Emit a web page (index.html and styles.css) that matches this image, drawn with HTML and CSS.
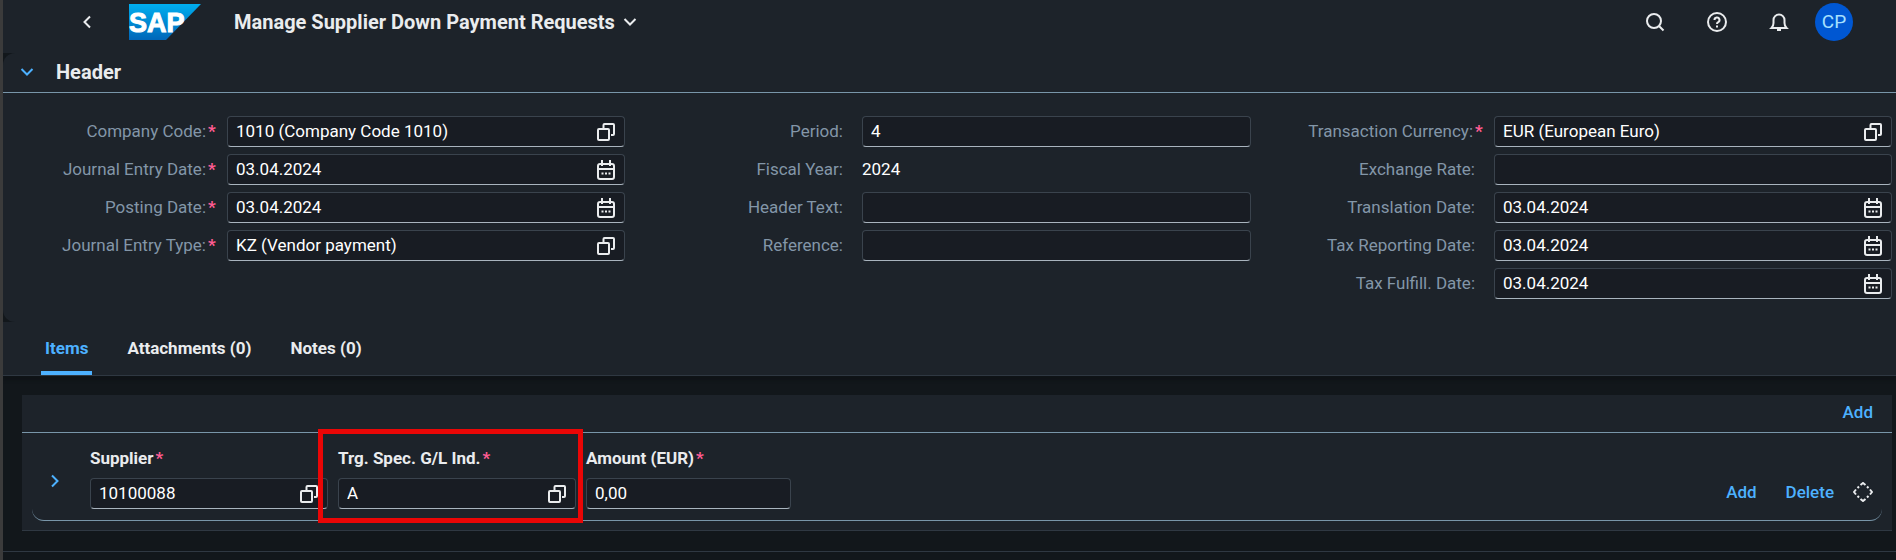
FILE: index.html
```html
<!DOCTYPE html>
<html lang="en">

<head>
  <meta charset="UTF-8" />
  <meta name="viewport" content="width=device-width, initial-scale=1.0" />
  <title>Manage Supplier Down Payment Requests</title>
  <link rel="stylesheet" href="styles.css">
</head>

<body>
  <!-- shared icons -->
  <svg class="sprite" aria-hidden="true">
    <symbol id="icon-value-help" viewBox="0 0 18 18">
      <path d="M6.500 5V2a1 1 0 0 1 1-1H16a1 1 0 0 1 1 1v9a1 1 0 0 1-1 1h-2" />
      <rect x="1" y="6" width="11" height="11" rx="1" />
    </symbol>
    <symbol id="icon-calendar" viewBox="0 0 18 20">
      <rect x="1" y="4" width="16" height="15" rx="2" />
      <path d="M1 9h16M5 0v6M13 0v6" />
      <path d="M4.500 13.500h2M8 13.500h2M11.500 13.500h2" />
    </symbol>
  </svg>

  <header class="shell">
    <button class="icon-button back" aria-label="Back">
      <svg width="10" height="14" viewBox="0 0 10 14"><path d="M8 1.500 2.500 7 8 12.500" /></svg>
    </button>
    <svg class="logo" width="72" height="36" viewBox="0 0 72 36" role="img" aria-label="SAP">
      <defs>
        <linearGradient id="logo-fill" x1="0" y1="0" x2="0" y2="1">
          <stop offset="0" stop-color="#00aeef" />
          <stop offset="1" stop-color="#0066b8" />
        </linearGradient>
      </defs>
      <path fill="url(#logo-fill)" d="M0 0h72L37 36H0z" />
      <text x="0" y="28">SAP</text>
    </svg>
    <button class="app-title">
      Manage Supplier Down Payment Requests
      <svg width="14" height="10" viewBox="0 0 14 10"><path d="M1.500 2 7 7.500 12.500 2" /></svg>
    </button>
    <div class="shell-actions">
      <button class="icon-button" aria-label="Search">
        <svg width="20" height="20" viewBox="0 0 20 20"><circle cx="9" cy="9" r="7" /><path d="m14 14 4.500 4.500" /></svg>
      </button>
      <button class="icon-button" aria-label="Help">
        <svg width="20" height="20" viewBox="0 0 20 20"><circle cx="10" cy="10" r="9" /><path d="M7.500 8a2.500 2.500 0 1 1 3.700 2.200c-.8.4-1.200.8-1.200 1.800M10 13.500v2" /></svg>
      </button>
      <button class="icon-button" aria-label="Notifications">
        <svg width="20" height="20" viewBox="0 0 20 20"><path d="M2.500 16c1.500-1.500 2-3 2-5V8a5.500 5.500 0 0 1 11 0v3c0 2 .5 3.500 2 5z" /><path d="M8 18h4" /></svg>
      </button>
      <button class="avatar" aria-label="Profile">CP</button>
    </div>
  </header>

  <main>
    <section class="panel">
      <div class="panel-title">
        <button class="icon-button" aria-label="Collapse header">
          <svg width="14" height="10" viewBox="0 0 14 10"><path d="M1.500 2 7 7.500 12.500 2" /></svg>
        </button>
        <h2>Header</h2>
      </div>

      <form class="form">
        <div class="form-group">
          <label class="required" for="company">Company Code:</label>
          <div class="field">
            <input id="company" type="text" value="1010 (Company Code 1010)">
            <svg class="field-icon" width="18" height="18"><use href="#icon-value-help" /></svg>
          </div>
          <label class="required" for="entryDate">Journal Entry Date:</label>
          <div class="field">
            <input id="entryDate" type="text" value="03.04.2024">
            <svg class="field-icon" width="18" height="20"><use href="#icon-calendar" /></svg>
          </div>
          <label class="required" for="postingDate">Posting Date:</label>
          <div class="field">
            <input id="postingDate" type="text" value="03.04.2024">
            <svg class="field-icon" width="18" height="20"><use href="#icon-calendar" /></svg>
          </div>
          <label class="required" for="entryType">Journal Entry Type:</label>
          <div class="field">
            <input id="entryType" type="text" value="KZ (Vendor payment)">
            <svg class="field-icon" width="18" height="18"><use href="#icon-value-help" /></svg>
          </div>
        </div>

        <div class="form-group">
          <label for="period">Period:</label>
          <div class="field"><input id="period" type="text" value="4"></div>
          <label for="fiscalYear">Fiscal Year:</label>
          <output id="fiscalYear">2024</output>
          <label for="headerText">Header Text:</label>
          <div class="field"><input id="headerText" type="text"></div>
          <label for="reference">Reference:</label>
          <div class="field"><input id="reference" type="text"></div>
        </div>

        <div class="form-group">
          <label class="required" for="currency">Transaction Currency:</label>
          <div class="field">
            <input id="currency" type="text" value="EUR (European Euro)">
            <svg class="field-icon" width="18" height="18"><use href="#icon-value-help" /></svg>
          </div>
          <label for="rate">Exchange Rate:</label>
          <div class="field"><input id="rate" type="text"></div>
          <label for="translationDate">Translation Date:</label>
          <div class="field">
            <input id="translationDate" type="text" value="03.04.2024">
            <svg class="field-icon" width="18" height="20"><use href="#icon-calendar" /></svg>
          </div>
          <label for="taxReportingDate">Tax Reporting Date:</label>
          <div class="field">
            <input id="taxReportingDate" type="text" value="03.04.2024">
            <svg class="field-icon" width="18" height="20"><use href="#icon-calendar" /></svg>
          </div>
          <label for="taxFulfillDate">Tax Fulfill. Date:</label>
          <div class="field">
            <input id="taxFulfillDate" type="text" value="03.04.2024">
            <svg class="field-icon" width="18" height="20"><use href="#icon-calendar" /></svg>
          </div>
        </div>
      </form>
    </section>

    <nav class="tabs">
      <a class="tab active" href="#items">Items</a>
      <a class="tab" href="#attachments">Attachments (0)</a>
      <a class="tab" href="#notes">Notes (0)</a>
    </nav>

    <section class="items" id="items">
      <div class="toolbar">
        <button class="link-button">Add</button>
      </div>
      <div class="item">
        <button class="icon-button expand" aria-label="Expand item">
          <svg width="10" height="14" viewBox="0 0 10 14"><path d="M2 1.500 7.500 7 2 12.500" /></svg>
        </button>
        <div class="item-field">
          <label class="required" for="supplier">Supplier</label>
          <div class="field">
            <input id="supplier" type="text" value="10100088">
            <svg class="field-icon" width="18" height="18"><use href="#icon-value-help" /></svg>
          </div>
        </div>
        <div class="item-field highlight">
          <label class="required" for="glIndicator">Trg. Spec. G/L Ind.</label>
          <div class="field">
            <input id="glIndicator" type="text" value="A">
            <svg class="field-icon" width="18" height="18"><use href="#icon-value-help" /></svg>
          </div>
        </div>
        <div class="item-field amount">
          <label class="required" for="amount">Amount (EUR)</label>
          <div class="field"><input id="amount" type="text" value="0,00"></div>
        </div>
        <div class="item-actions">
          <button class="link-button">Add</button>
          <button class="link-button">Delete</button>
          <svg width="20" height="20" viewBox="0 0 20 20"><path d="M7.500 3 10 1l2.500 2M17 7.500 19 10l-2 2.500M12.500 17 10 19l-2.500-2M3 12.500 1 10l2-2.500M4.500 6 6 4.500M14 4.500 15.500 6M15.500 14 14 15.500M6 15.500 4.500 14" /></svg>
        </div>
      </div>
    </section>
  </main>

  <footer class="footer"></footer>
</body>

</html>
```
FILE: styles.css
```css
* {
  box-sizing: border-box;
}

body {
  margin: 0;
  min-height: 100vh;
  display: flex;
  flex-direction: column;
  border-left: 3px solid #3b3b3b;
  background-color: #12171b;
  color: #eaecee;
  font-family: Roboto, "Liberation Sans", sans-serif;
  font-size: 17px;
  line-height: 20px;
}

svg {
  flex: none;
  fill: none;
  stroke: currentColor;
  stroke-width: 2;
}

button {
  border: 0;
  padding: 0;
  background: none;
  color: inherit;
  font: inherit;
}

.sprite {
  position: absolute;
  width: 0;
  height: 0;
}

.icon-button {
  display: flex;
  align-items: center;
  justify-content: center;
}

/* shell bar */
.shell {
  display: flex;
  align-items: center;
  height: 53px;
  padding: 0 43px 9px 79px;
  background-color: #1d232a;
}

.logo {
  margin: 0 33px 0 37px;
  stroke: none;
}

.logo text {
  fill: #fff;
  stroke: #fff;
  stroke-width: 1;
  font-family: "Liberation Sans", sans-serif;
  font-size: 27px;
  font-weight: 700;
}

.app-title {
  display: flex;
  align-items: center;
  gap: 8px;
  font-size: 20px;
  font-weight: 700;
}

.shell-actions {
  display: flex;
  align-items: center;
  gap: 42px;
  margin-left: auto;
}

.avatar {
  width: 38px;
  height: 38px;
  margin-left: -16px;
  border-radius: 50%;
  background-color: #0057d2;
  color: #a6e0ff;
  font-size: 19px;
}

/* header panel */
.panel {
  border-radius: 12px 0 0 12px;
  background-color: #1d232a;
}

.panel-title {
  display: flex;
  align-items: center;
  gap: 22px;
  height: 40px;
  padding: 0 17px 2px;
  border-bottom: 1px solid #7996a9;
}

.panel-title .icon-button,
.expand {
  color: #4db1ff;
}

h2 {
  margin: 0;
  font-size: 20px;
  font-weight: 700;
}

.form {
  display: grid;
  grid-template-columns:
    minmax(0, 224fr) minmax(0, 398fr)
    minmax(0, 237fr) minmax(0, 389fr)
    minmax(0, 243fr) minmax(0, 398fr);
  padding: 23px 4px 23px 0;
}

.form-group {
  display: grid;
  grid-column: span 2;
  grid-template-columns: subgrid;
  grid-auto-rows: 31px;
  gap: 7px 0;
}

.form-group label {
  display: flex;
  align-items: center;
  justify-content: flex-end;
  padding: 0 9px 2px 0;
  color: #8396a8;
  white-space: nowrap;
}

.form-group label::after {
  content: "";
  width: 10px;
}

.form-group .required::after,
.item-field .required::after {
  content: "*";
  padding-left: 2px;
  color: #ff5c93;
  font-weight: 700;
}

output {
  display: flex;
  align-items: center;
  padding-bottom: 2px;
  color: #fff;
}

.field {
  display: flex;
  align-items: center;
  height: 31px;
  padding-right: 9px;
  border: 1px solid #3a434d;
  border-bottom-color: #a9b4be;
  border-radius: 4px;
  background-color: #181c23;
}

.field input {
  flex: 1;
  min-width: 0;
  padding: 0 0 2px 8px;
  border: 0;
  outline: 0;
  background: none;
  color: #fff;
  font: inherit;
}

/* tabs */
.tabs {
  display: flex;
  gap: 31px;
  height: 54px;
  padding-left: 38px;
  border-bottom: 1px solid #2f3842;
  background-color: #1d232a;
  box-shadow: 0 4px 3px #0f1317;
}

.tab {
  padding: 16px 4px 0;
  color: inherit;
  font-weight: 700;
  text-decoration: none;
}

.tab.active {
  border-bottom: 4px solid #4db1ff;
  border-radius: 2px 2px 0 0;
  color: #4db1ff;
}

main {
  background-color: #12171b;
}

/* items */
.items {
  margin: 19px 4px 20px 19px;
  padding-bottom: 9px;
  border-bottom: 1px solid #2f3842;
  background-color: #1d232a;
}

.toolbar {
  display: flex;
  justify-content: flex-end;
  height: 38px;
  padding: 0 19px 4px;
  border-bottom: 1px solid #7996a9;
}

.link-button {
  color: #4db1ff;
  font-weight: 500;
}

.item {
  display: flex;
  gap: 10px;
  margin: 0 10px;
  padding: 15px 9px 11px 18px;
  border-bottom: 1px solid #7996a9;
  border-radius: 0 0 12px 12px;
}

.expand {
  width: 10px;
  height: 14px;
  margin: 26px 20px 0 0;
}

.item-field {
  width: 238px;
}

.item-field label {
  display: block;
  margin-bottom: 10px;
  font-weight: 700;
}

.amount {
  width: 205px;
}

/* red frame around the special G/L indicator */
.highlight {
  position: relative;
}

.highlight::before {
  content: "";
  position: absolute;
  inset: -19px -7px -14px -20px;
  border: 5px solid #ea0606;
  pointer-events: none;
}

.item-actions {
  display: flex;
  align-items: center;
  align-self: flex-end;
  gap: 29px;
  height: 31px;
  padding-bottom: 3px;
  margin-left: auto;
}

.item-actions svg {
  margin-left: -10px;
}

.footer {
  flex: 1;
  border-top: 1px solid #2f3842;
}
```
